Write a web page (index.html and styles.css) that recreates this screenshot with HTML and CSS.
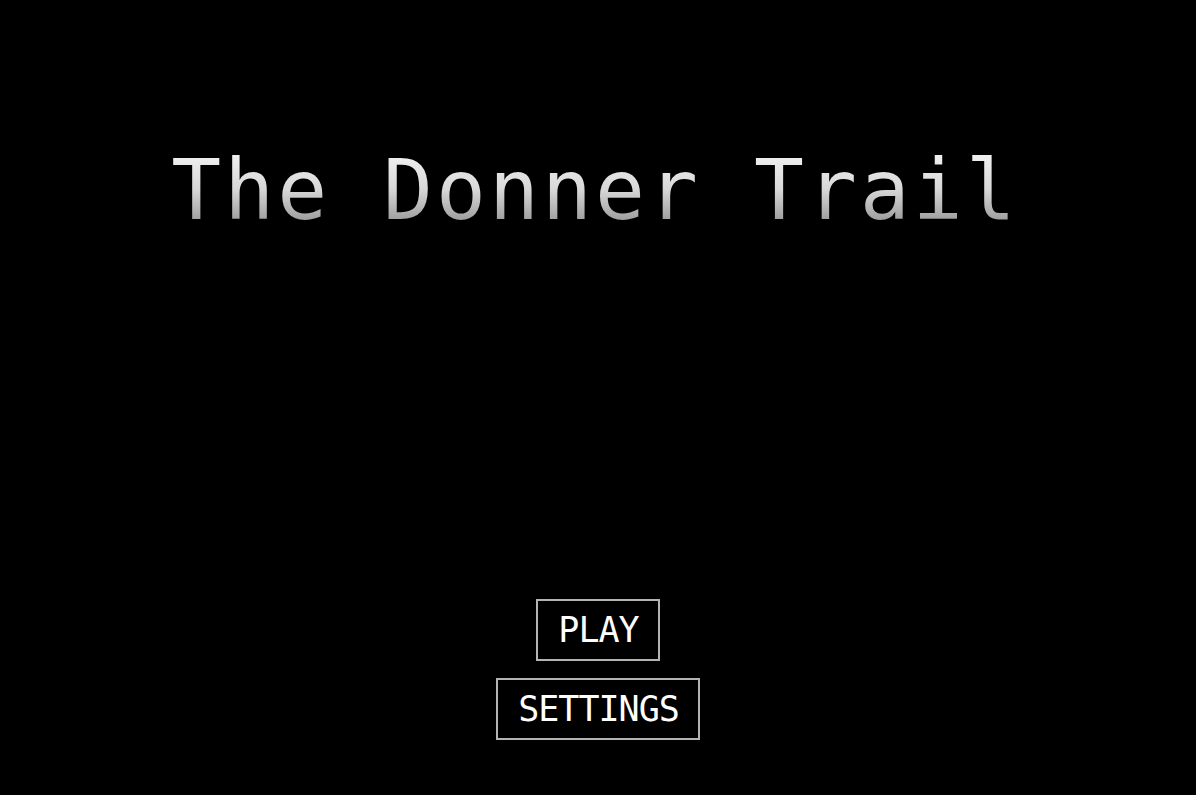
FILE: index.html
```html
<!DOCTYPE html>
<html lang="en">
<head>
<meta charset="utf-8">
<title>The Donner Trail</title>
<link rel="stylesheet" href="styles.css">
</head>
<body>
<main class="screen">
  <h1 class="title">The Donner Trail</h1>
  <nav class="menu">
    <button class="menu-btn">PLAY</button>
    <button class="menu-btn">SETTINGS</button>
  </nav>
</main>
</body>
</html>
```
FILE: styles.css
```css
html, body {
  margin: 0;
  padding: 0;
  background: #000;
}

.screen {
  width: 1196px;
  height: 795px;
  display: flex;
  flex-direction: column;
  align-items: center;
  box-sizing: border-box;
  padding-top: 149px;
  padding-bottom: 55px;
}

.title {
  margin: 0;
  font-family: "DejaVu Sans Mono", "Liberation Mono", monospace;
  font-weight: normal;
  font-size: 83px;
  line-height: 1;
  letter-spacing: 3px;
  padding-right: 6px;
  white-space: pre;
  background: linear-gradient(180deg, #f4f4f4 0px, #d8d8d8 40px, #9a9a9a 74px, #7a7a7a 83px);
  -webkit-background-clip: text;
  background-clip: text;
  color: transparent;
}

.menu {
  margin-top: auto;
  display: flex;
  flex-direction: column;
  align-items: center;
  gap: 17px;
}

.menu-btn {
  box-sizing: border-box;
  height: 62px;
  padding: 0 19px 0 20px;
  border: 2px solid #b4b4b4;
  background: #000;
  color: #fff;
  font-family: "DejaVu Sans Mono", "Liberation Mono", monospace;
  font-size: 35px;
  letter-spacing: -1px;
  line-height: 58px;
  cursor: pointer;
}
```
